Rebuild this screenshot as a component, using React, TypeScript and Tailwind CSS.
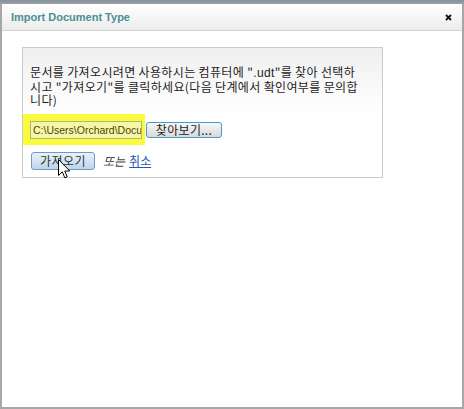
import React from "react";

const kr = '"Noto Sans CJK KR", "Noto Sans", sans-serif';

function Cursor() {
  return (
    <svg
      className="absolute left-[27px] top-[7px]"
      width="13"
      height="21"
      viewBox="0 0 13 21"
    >
      <path
        d="M0.5 0.5 L0.5 16.5 L4.3 12.8 L6.8 18.8 L9.2 17.8 L6.8 12 L11.8 12 Z"
        fill="#ffffff"
        stroke="#000000"
        strokeWidth="1"
        strokeLinejoin="round"
      />
    </svg>
  );
}

export default function App() {
  return (
    <div className="w-[464px] h-[409px] bg-[#a7a7a7] flex flex-col overflow-hidden">
      <div className="h-[2px] bg-[#8596a4] shrink-0" />
      <div className="h-[2px] bg-[#9c9c9c] shrink-0" />
      <div className="flex-1 mx-[2px] mb-[2px] bg-white flex flex-col">
        {/* title bar */}
        <div className="h-[27px] shrink-0 flex items-center justify-between pl-[9px] pr-[10px] bg-gradient-to-b from-white to-[#ececec] border-b border-[#d2d2d2]">
          <span
            className="text-[11px] font-bold text-[#4b8f95]"
            style={{ fontFamily: '"Liberation Sans", Arial, sans-serif' }}
          >
            Import Document Type
          </span>
          <svg width="7" height="7" viewBox="0 0 7 7" className="mt-[1px]">
            <path d="M1 1 L6 6 M6 1 L1 6" stroke="#111" strokeWidth="1.8" />
          </svg>
        </div>

        {/* body */}
        <div className="pt-[16px] pl-[20px]">
          <div className="w-[361px] h-[131px] border border-[#cbcbcb] bg-gradient-to-b from-[#efefef] via-white to-white flex flex-col">
            <p
              className="pl-[7px] pt-[17px] text-[12px] leading-[13px] text-[#1c1c1c] tracking-[0.35px] whitespace-nowrap"
              style={{ fontFamily: kr }}
            >
              문서를 가져오시려면 사용하시는 컴퓨터에 "
              <span style={{ fontFamily: '"Liberation Sans", Arial, sans-serif' }}>.udt</span>
              "를 찾아 선택하
              <br />
              시고 "가져오기"를 클릭하세요(다음 단계에서 확인여부를 문의합
              <br />
              니다)
            </p>

            <div className="mt-[8px] flex items-center">
              <div className="w-[122px] h-[31px] bg-[#fbfb3e] flex items-center pl-[7px] pr-[3px]">
                <div
                  className="w-[112px] h-[18px] border border-[#b3b37a] bg-[#f6f6a8] overflow-hidden whitespace-nowrap pl-[2px] text-[10.5px] leading-[16px] text-[#4a4606]"
                  style={{ fontFamily: '"Liberation Sans", Arial, sans-serif' }}
                >
                  C:\Users\Orchard\Documents\sample.udt
                </div>
              </div>
              <button
                className="ml-[1px] w-[76px] h-[16px] rounded-[3px] border border-[#3f9ccd] bg-gradient-to-b from-[#f7f7f7] to-[#d9d9d9] text-[12px] leading-[12px] text-[#1c1c1c] tracking-[0.3px]"
                style={{ fontFamily: kr }}
              >
                찾아보기...
              </button>
            </div>

            <div className="mt-[7px] ml-[8px] flex items-center relative">
              <button
                className="w-[64px] h-[18px] rounded-[3px] border border-[#6e9cc0] bg-gradient-to-b from-[#e8f2fa] to-[#bdd6eb] text-[12px] leading-[14px] text-[#333] tracking-[0.5px]"
                style={{ fontFamily: kr }}
              >
                가져오기
              </button>
              <span
                className="ml-[8px] text-[12px] italic text-[#444]"
                style={{ fontFamily: kr }}
              >
                또는
              </span>
              <a
                className="ml-[4px] text-[12px] text-[#2556b8] underline"
                style={{ fontFamily: kr }}
              >
                취소
              </a>
              <Cursor />
            </div>
          </div>
        </div>
      </div>
    </div>
  );
}
